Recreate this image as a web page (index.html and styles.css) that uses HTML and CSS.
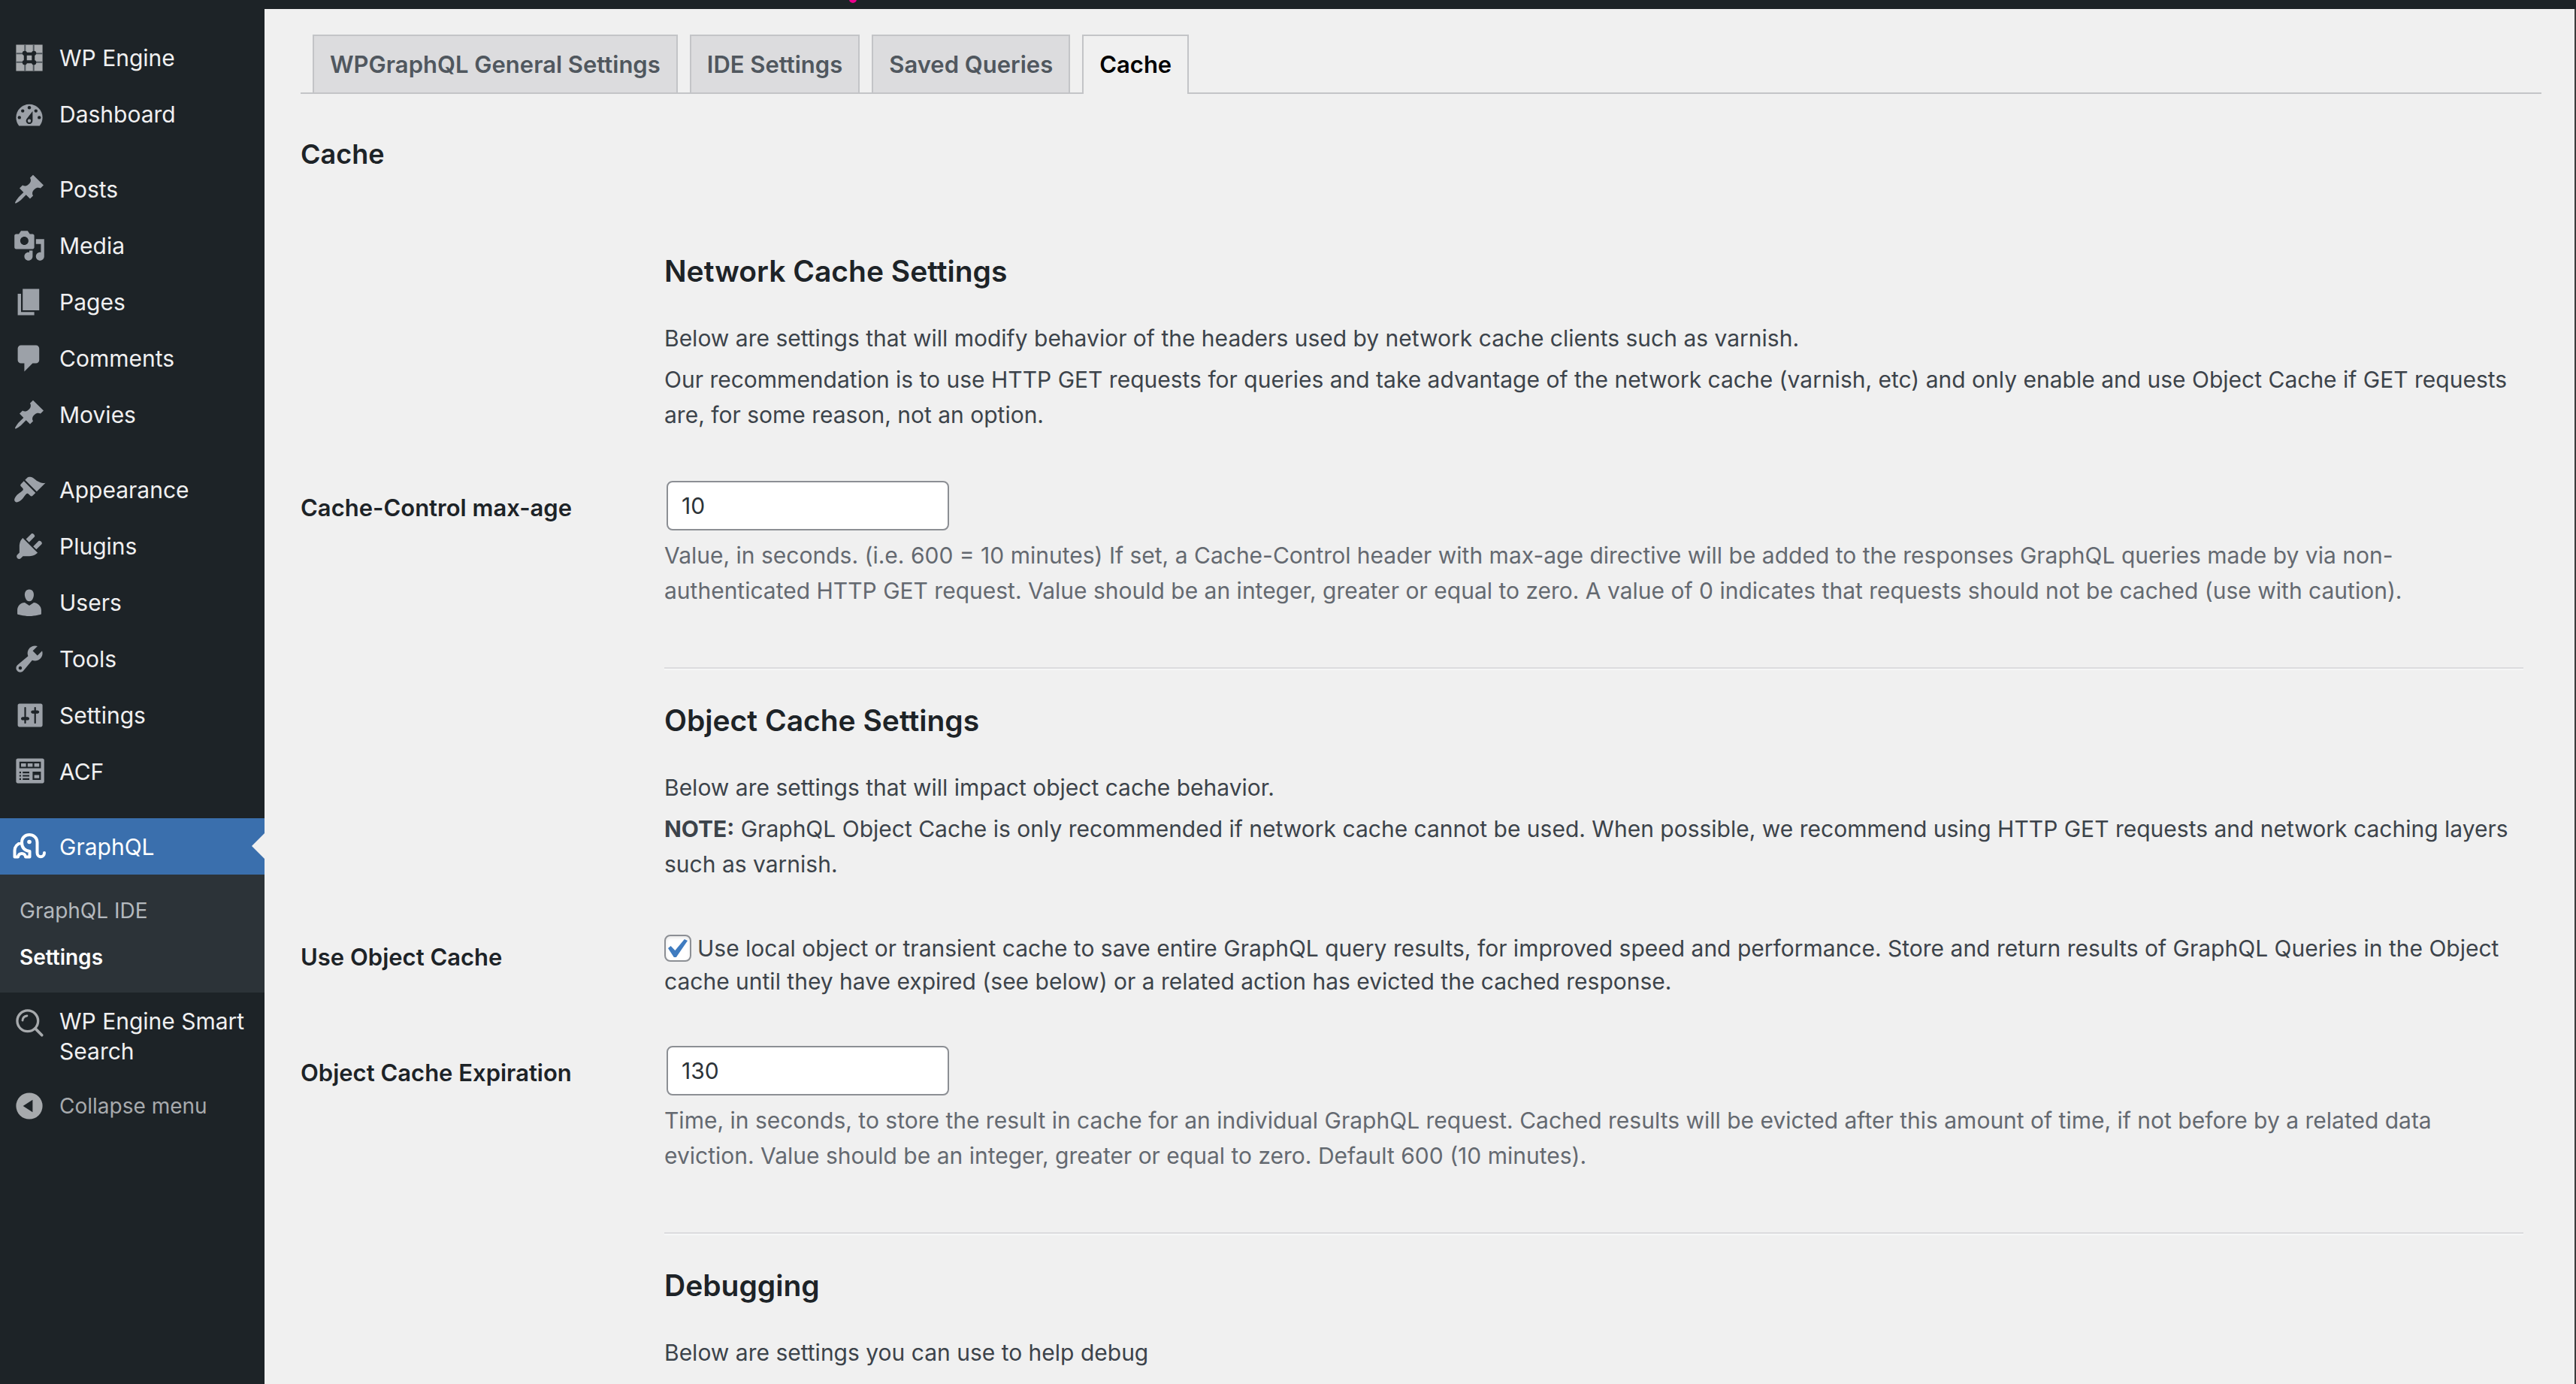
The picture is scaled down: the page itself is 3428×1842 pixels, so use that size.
FILE: index.html
```html
<!DOCTYPE html>
<html lang="en">
<head>
<meta charset="utf-8">
<title>WPGraphQL Settings</title>
<link rel="stylesheet" href="styles.css">
</head>
<body>
<header class="adminbar"><span class="adminbar-mark"></span></header>
<div class="layout">
  <nav class="menu" aria-label="Main menu">
    <ul class="menu-group">
      <li><a class="item" href="#"><svg class="icon" viewBox="0 0 20 20"><path fill="#a7aaad" d="M2 2h16v16H2z"/><path stroke="#50575d" stroke-width=".9" d="M7.4 2v16M12.6 2v16M2 7.4h16M2 12.6h16"/><path fill="#a7aaad" stroke="#1d2327" stroke-width="1.8" d="M7.6 7.6h4.8v4.8H7.6z"/><g fill="#1d2327"><circle cx="7.2" cy="7.2" r="1.4"/><circle cx="12.8" cy="7.2" r="1.4"/><circle cx="7.2" cy="12.8" r="1.4"/><circle cx="12.8" cy="12.8" r="1.4"/></g></svg>WP Engine</a></li>
      <li><a class="item" href="#"><svg class="icon" viewBox="0 0 20 20"><path d="M3.76 17h12.48c1.1-1.37 1.76-3.11 1.76-5 0-4.42-3.58-8-8-8s-8 3.58-8 8c0 1.89.66 3.63 1.76 5z"/><g fill="#1d2327"><circle cx="10" cy="6" r="1"/><circle cx="6" cy="8" r="1"/><circle cx="14" cy="8" r="1"/><circle cx="4" cy="12" r="1"/><circle cx="16" cy="12" r="1"/><path d="M12 8.200v5.800a2 2 0 1 1-3.700-1.100z"/></g><circle cx="10" cy="14" r="1"/></svg>Dashboard</a></li>
    </ul>
    <ul class="menu-group">
      <li><a class="item" href="#"><svg class="icon" viewBox="0 0 20 20"><path id="pin" d="M10.44 3.02l1.82-1.82 6.36 6.35-1.83 1.82c-1.05-.68-2.48-.57-3.41.36l-.75.75c-.92.93-1.04 2.35-.35 3.41l-1.83 1.82-2.41-2.41-2.8 2.79c-.42.42-3.38 2.71-3.8 2.29s1.86-3.39 2.28-3.81l2.79-2.79L4.1 9.36l1.83-1.82c1.05.69 2.48.57 3.4-.36l.75-.75c.93-.92 1.05-2.35.36-3.41z"/></svg>Posts</a></li>
      <li><a class="item" href="#"><svg class="icon" viewBox="0 0 20 20"><path d="M13 11V4c0-.55-.45-1-1-1h-1.67L9 1H5L3.67 3H2c-.55 0-1 .45-1 1v7c0 .55.45 1 1 1h10c.55 0 1-.45 1-1zM7 4.5c1.38 0 2.5 1.12 2.5 2.5S8.38 9.5 7 9.5 4.5 8.38 4.5 7 5.62 4.5 7 4.5zM14 6h5v10.5c0 1.38-1.12 2.5-2.5 2.5S14 17.88 14 16.5s1.12-2.5 2.5-2.5c.17 0 .34.02.5.05V9h-3V6zm-4 8.05V13h2v3.5c0 1.38-1.12 2.5-2.5 2.5S7 17.88 7 16.5 8.12 14 9.5 14c.17 0 .34.02.5.05z"/></svg>Media</a></li>
      <li><a class="item" href="#"><svg class="icon" viewBox="0 0 20 20"><path d="M6 15V2h10v13H6zm-1 1h8v2H3V5h2v11z"/></svg>Pages</a></li>
      <li><a class="item" href="#"><svg class="icon" viewBox="0 0 20 20"><path d="M5 2h9c1.1 0 2 .9 2 2v7c0 1.1-.9 2-2 2h-2l-5 5v-5H5c-1.1 0-2-.9-2-2V4c0-1.1.9-2 2-2z"/></svg>Comments</a></li>
      <li><a class="item" href="#"><svg class="icon" viewBox="0 0 20 20"><use href="#pin"/></svg>Movies</a></li>
    </ul>
    <ul class="menu-group">
      <li><a class="item" href="#"><svg class="icon" viewBox="0 0 20 20"><path d="M14.48 11.06L7.41 3.99l1.5-1.5c.5-.56 2.3-.47 3.51.32 1.21.8 1.43 1.28 2.91 2.1 1.18.64 2.45 1.26 4.45.85zm-.71.71L6.7 4.7 4.93 6.47c-.39.39-.39 1.02 0 1.41l1.06 1.06c.39.39.39 1.03 0 1.42-.6.6-1.43 1.11-2.21 1.69-.35.26-.7.53-1.01.84C1.43 14.23.4 16.08 1.4 17.07c.99 1 2.84-.03 4.18-1.36.31-.31.58-.66.85-1.02.57-.78 1.08-1.61 1.69-2.21.39-.39 1.02-.39 1.41 0l1.06 1.06c.39.39 1.02.39 1.41 0z"/></svg>Appearance</a></li>
      <li><a class="item" href="#"><svg class="icon" viewBox="0 0 20 20"><path d="M13.11 4.36L9.87 7.6 8 5.73l3.24-3.24c.35-.34 1.05-.2 1.56.32.52.51.66 1.21.31 1.55zm-8 1.77l.91-1.12 9.01 9.01-1.19.84c-.71.71-2.63 1.16-3.82 1.16H6.14L4.9 17.26c-.59.59-1.54.59-2.12 0-.59-.58-.59-1.53 0-2.12l1.24-1.24v-3.88c0-1.13.4-3.19 1.09-3.89zm7.26 3.97l3.24-3.24c.34-.35 1.04-.21 1.55.31.52.51.66 1.21.31 1.55l-3.24 3.25z"/></svg>Plugins</a></li>
      <li><a class="item" href="#"><svg class="icon" viewBox="0 0 20 20"><path d="M10 9.25c-2.27 0-2.73-3.44-2.73-3.44C7 4.02 7.82 2 9.97 2c2.16 0 2.98 2.02 2.71 3.81 0 0-.41 3.44-2.68 3.44zm0 2.57L12.72 10c2.39 0 4.52 2.33 4.52 4.53v2.49s-3.65 1.13-7.24 1.13c-3.65 0-7.24-1.13-7.24-1.13v-2.49c0-2.25 1.94-4.48 4.47-4.48z"/></svg>Users</a></li>
      <li><a class="item" href="#"><svg class="icon" viewBox="0 0 20 20"><path d="M16.68 9.77c-1.34 1.34-3.3 1.67-4.95.99l-5.41 6.52c-.99.99-2.59.99-3.58 0s-.99-2.59 0-3.57l6.52-5.42c-.68-1.65-.35-3.61.99-4.95 1.28-1.28 3.12-1.62 4.72-1.06l-2.89 2.89 2.82 2.82 2.86-2.87c.53 1.58.18 3.39-1.08 4.65zM3.81 16.21c.4.39 1.04.39 1.43 0 .4-.4.4-1.04 0-1.43-.39-.4-1.03-.4-1.43 0-.39.39-.39 1.03 0 1.43z"/></svg>Tools</a></li>
      <li><a class="item" href="#"><svg class="icon" viewBox="0 0 20 20"><path d="M18 16V4c0-.55-.45-1-1-1H4c-.55 0-1 .45-1 1v12c0 .55.45 1 1 1h13c.55 0 1-.45 1-1zM8 11h1c.55 0 1 .45 1 1s-.45 1-1 1H8v1.5c0 .28-.22.5-.5.5s-.5-.22-.5-.5V13H6c-.55 0-1-.45-1-1s.45-1 1-1h1V5.5c0-.28.22-.5.5-.5s.5.22.5.5V11zm5-2h-1c-.55 0-1-.45-1-1s.45-1 1-1h1V5.500c0-.28.22-.5.5-.5s.5.22.5.5V7h1c.55 0 1 .45 1 1s-.45 1-1 1h-1v5.500c0 .28-.22.5-.5.5s-.5-.22-.5-.5V9z"/></svg>Settings</a></li>
      <li><a class="item" href="#"><svg class="icon" viewBox="0 0 20 20"><path fill-rule="evenodd" d="M3 2h15c.55 0 1 .45 1 1v13c0 .55-.45 1-1 1H3c-.55 0-1-.45-1-1V3c0-.55.45-1 1-1zm1 2v4h13V4zm1 1h3v2H5zm4 0h3v2H9zm4 0h3v2h-3zM4 10v1h1v-1zm2 0v1h4v-1zm-2 2v1h1v-1zm2 0v1h4v-1zm-2 2v1h1v-1zm2 0v1h4v-1zm6-4v5h5v-5zm1 2h3v2h-3z"/></svg>ACF</a></li>
    </ul>
    <ul class="menu-group">
      <li>
        <a class="item current" href="#"><svg class="icon" viewBox="0 0 44 44"><g fill="none" stroke="#fff" stroke-width="4" stroke-linejoin="round" stroke-linecap="round"><path d="M12 16.500C6 17.500 2.500 22 2.500 27v8.500H7c1-6 9-6 10 0h5.500V28C15 27 12 22 12 16 12 10 16.500 6 22 6s10.500 4 10.500 10v14c0 7 9.500 7 9.500 0"/></g><circle cx="22" cy="15.500" r="2.800" fill="#fff"/></svg>GraphQL</a>
        <ul class="submenu">
          <li><a class="subitem" href="#">GraphQL IDE</a></li>
          <li><a class="subitem active" href="#">Settings</a></li>
        </ul>
      </li>
      <li><a class="item tall" href="#"><svg class="icon" viewBox="0 0 20 20"><g fill="none" stroke="#a7aaad" stroke-linecap="round"><circle cx="9" cy="9" r="6.300" stroke-width="1.500"/><path stroke-width="1.700" d="M13.600 13.600l4 4"/><path stroke-width="1.300" d="M5.900 8.700c.1-1.500 1.200-2.600 2.700-2.800"/></g></svg>WP Engine Smart Search</a></li>
      <li><button class="item collapse" type="button"><svg class="icon" viewBox="0 0 20 20"><path fill-rule="evenodd" d="M10 2a8 8 0 1 1 0 16 8 8 0 0 1 0-16zm2 4.200L6.200 10l5.800 3.800z"/></svg>Collapse menu</button></li>
    </ul>
  </nav>
  <main class="content">
    <nav class="tabs" aria-label="Settings sections">
      <a class="tab" href="#">WPGraphQL General Settings</a>
      <a class="tab" href="#">IDE Settings</a>
      <a class="tab" href="#">Saved Queries</a>
      <a class="tab selected" href="#">Cache</a>
    </nav>
    <h2 class="page-title">Cache</h2>
    <form class="form">
      <section class="intro">
        <h2>Network Cache Settings</h2>
        <p>Below are settings that will modify behavior of the headers used by network cache clients such as varnish.</p>
        <p>Our recommendation is to use HTTP GET requests for queries and take advantage of the network cache (varnish, etc) and only enable and use Object Cache if GET requests are, for some reason, not an option.</p>
      </section>
      <div class="row">
        <label class="label" for="max-age">Cache-Control max-age</label>
        <div class="field">
          <input class="text" id="max-age" type="text" value="10">
          <p class="description">Value, in seconds. (i.e. 600 = 10 minutes) If set, a Cache-Control header with max-age directive will be added to the responses GraphQL queries made by via non-authenticated HTTP GET request. Value should be an integer, greater or equal to zero. A value of 0 indicates that requests should not be cached (use with caution).</p>
        </div>
      </div>
      <hr>
      <section class="intro">
        <h2>Object Cache Settings</h2>
        <p>Below are settings that will impact object cache behavior.</p>
        <p><strong>NOTE:</strong> GraphQL Object Cache is only recommended if network cache cannot be used. When possible, we recommend using HTTP GET requests and network caching layers such as varnish.</p>
      </section>
      <div class="row">
        <label class="label" for="object-cache">Use Object Cache</label>
        <label class="field check"><input class="box" id="object-cache" type="checkbox" checked>Use local object or transient cache to save entire GraphQL query results, for improved speed and performance. Store and return results of GraphQL Queries in the Object cache until they have expired (see below) or a related action has evicted the cached response.</label>
      </div>
      <div class="row">
        <label class="label" for="expiration">Object Cache Expiration</label>
        <div class="field">
          <input class="text" id="expiration" type="text" value="130">
          <p class="description">Time, in seconds, to store the result in cache for an individual GraphQL request. Cached results will be evicted after this amount of time, if not before by a related data eviction. Value should be an integer, greater or equal to zero. Default 600 (10 minutes).</p>
        </div>
      </div>
      <hr>
      <section class="intro">
        <h2>Debugging</h2>
        <p>Below are settings you can use to help debug</p>
      </section>
    </form>
  </main>
</div>
</body>
</html>
```
FILE: styles.css
```css
* { box-sizing: border-box; }

html, body { height: 100%; }

body {
  margin: 0;
  display: flex;
  flex-direction: column;
  overflow: hidden;
  background: #f0f0f0;
  color: #3c434a;
  font: 30px/47px Inter, "Liberation Sans", sans-serif;
}

h2, p, ul { margin: 0; padding: 0; }
ul { list-style: none; }
a { color: inherit; text-decoration: none; }

.adminbar {
  flex: none;
  position: relative;
  height: 12px;
  background: #1d2327;
  overflow: hidden;
}

.adminbar-mark {
  position: absolute;
  left: 1130px;
  bottom: 8px;
  width: 10px;
  height: 12px;
  border-radius: 5px;
  background: #ec008c;
}

.layout { flex: 1; min-height: 0; display: flex; }

/* Side menu */
.menu {
  flex: none;
  width: 352px;
  padding-top: 27px;
  background: #1d2327;
  color: #f0f0f1;
}

.menu-group + .menu-group { margin-top: 25px; }

.item {
  display: flex;
  align-items: center;
  gap: 18px;
  width: 100%;
  min-height: 75px;
  padding: 0 20px 0 17px;
  line-height: 40px;
}

.icon { flex: none; width: 44px; height: 44px; fill: #9ca1a8; overflow: visible; }

.current {
  position: relative;
  background: #3a6fad;
  color: #fff;
}

.current::after {
  content: "";
  position: absolute;
  right: 0;
  top: 20px;
  border: 17px solid transparent;
  border-left-width: 0;
  border-right-color: #f0f0f0;
}

.submenu {
  padding: 17px 0 16px;
  background: #2c3338;
}

.subitem {
  display: block;
  padding: 11px 26px;
  font-size: 28px;
  line-height: 40px;
  color: #b4b9be;
}

.subitem.active { color: #fff; font-weight: 600; }

.tall { align-items: flex-start; padding: 18px 20px 15px 17px; }

.collapse {
  border: 0;
  background: none;
  font: 28px/40px Inter, "Liberation Sans", sans-serif;
  color: #a7aaad;
  text-align: left;
}

.collapse .icon { fill: #a7aaad; }

/* Settings page */
.content {
  flex: 1;
  min-width: 0;
  padding: 34px 44px 0 48px;
  border-right: 2px solid #3c3c3c;
}

.tabs {
  display: flex;
  gap: 16px;
  padding-left: 16px;
  border-bottom: 2px solid #c3c4c7;
}

.tab {
  padding: 16px 21px 15px;
  border: 2px solid #c3c4c7;
  border-bottom: 0;
  background: #dcdcde;
  color: #50575e;
  font-size: 31px;
  font-weight: 600;
  line-height: 44px;
}

.selected {
  margin-bottom: -2px;
  background: #f0f0f0;
  color: #000;
}

.page-title {
  margin-top: 52px;
  font-size: 36px;
  line-height: 56px;
  font-weight: 600;
  color: #1d2327;
}

.form { padding: 0 24px 0 0; }

.intro { padding: 100px 0 0 484px; }
hr + .intro { padding-top: 39px; }

.intro h2 {
  margin-bottom: 38px;
  font-size: 39px;
  line-height: 56px;
  font-weight: 600;
  color: #1d2327;
}

.intro p + p { margin-top: 8px; }

.row { display: flex; padding-top: 64px; }

.label {
  flex: none;
  width: 484px;
  padding-top: 16px;
  font-size: 31px;
  line-height: 40px;
  font-weight: 600;
  color: #1d2327;
}

.field { flex: 1; min-width: 0; }

.text {
  display: block;
  width: 376px;
  height: 66px;
  margin-left: 3px;
  padding: 0 18px;
  border: 2px solid #8c8f94;
  border-radius: 8px;
  background: #fff;
  color: #2c3338;
  font: inherit;
}

.description { margin-top: 10px; color: #646970; }

.check { padding-top: 2px; line-height: 44px; }

.box {
  appearance: none;
  display: inline-grid;
  place-items: center;
  width: 36px;
  height: 36px;
  margin: 0 8px 0 0;
  border: 2px solid #8c8f94;
  border-radius: 8px;
  background: #fff;
  box-shadow: inset 0 2px 4px rgba(0, 0, 0, .1);
  vertical-align: -1px;
}

.box::before {
  content: "";
  width: 26px;
  height: 24px;
  background: #3f7cc0;
  clip-path: polygon(0 50%, 14% 38%, 36% 62%, 84% 0, 100% 8%, 42% 100%, 30% 100%);
}

hr {
  height: 4px;
  margin: 78px 0 0 484px;
  border: 0;
  border-top: 2px solid #dcdcde;
  border-bottom: 2px solid #f6f7f7;
}
```
